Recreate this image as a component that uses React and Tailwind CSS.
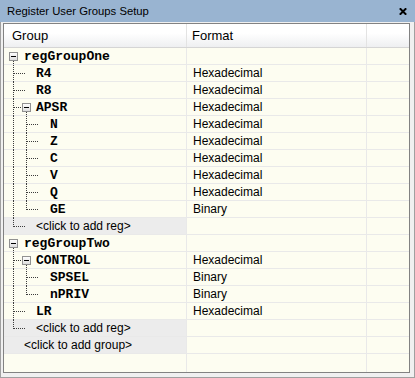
import React from 'react';

const sans = { fontFamily: '"Liberation Sans", Arial, sans-serif' };
const mono = { fontFamily: '"Liberation Mono", "Courier New", monospace' };

// tree guide config per row:
// v0/v1: 'full' | 'top' | 'bottom'  (dotted verticals at level 0 / level 1)
// h0: connector to a level-1 leaf, hb: connector to a level-1 box, h1: connector to a level-2 leaf
const rows = [
  { name: 'regGroupOne', pad: 20, box0: true, v0: 'bottom' },
  { name: 'R4', fmt: 'Hexadecimal', pad: 32, v0: 'full', h0: true },
  { name: 'R8', fmt: 'Hexadecimal', pad: 32, v0: 'full', h0: true },
  { name: 'APSR', fmt: 'Hexadecimal', pad: 32, v0: 'full', hb: true, box1: true, v1: 'bottom' },
  { name: 'N', fmt: 'Hexadecimal', pad: 46, v0: 'full', v1: 'full', h1: true },
  { name: 'Z', fmt: 'Hexadecimal', pad: 46, v0: 'full', v1: 'full', h1: true },
  { name: 'C', fmt: 'Hexadecimal', pad: 46, v0: 'full', v1: 'full', h1: true },
  { name: 'V', fmt: 'Hexadecimal', pad: 46, v0: 'full', v1: 'full', h1: true },
  { name: 'Q', fmt: 'Hexadecimal', pad: 46, v0: 'full', v1: 'full', h1: true },
  { name: 'GE', fmt: 'Binary', pad: 46, v0: 'full', v1: 'top', h1: true },
  { add: '<click to add reg>', pad: 32, v0: 'top', h0: true },
  { name: 'regGroupTwo', pad: 20, box0: true, v0: 'bottom' },
  { name: 'CONTROL', fmt: 'Hexadecimal', pad: 32, v0: 'full', hb: true, box1: true, v1: 'bottom' },
  { name: 'SPSEL', fmt: 'Binary', pad: 46, v0: 'full', v1: 'full', h1: true },
  { name: 'nPRIV', fmt: 'Binary', pad: 46, v0: 'full', v1: 'top', h1: true },
  { name: 'LR', fmt: 'Hexadecimal', pad: 32, v0: 'full', h0: true },
  { add: '<click to add reg>', pad: 32, v0: 'top', h0: true },
  { add: '<click to add group>', pad: 20 },
];

const vSpan = (mode) => {
  if (mode === 'full') return [0, 17];
  if (mode === 'top') return [0, 9];
  if (mode === 'bottom') return [13, 17];
  return null;
};

const MinusBox = ({ x }) => (
  <g>
    <rect x={x + 0.5} y={4.5} width={8} height={8} fill="url(#boxfill)" stroke="#919191" />
    <rect x={x + 2} y={8} width={5} height={1} fill="#000" />
  </g>
);

const TreeGuides = ({ row }) => {
  const dot = { stroke: '#3c3c3c', strokeWidth: 1, strokeDasharray: '1 1', shapeRendering: 'crispEdges' };
  const s0 = vSpan(row.v0);
  const s1 = vSpan(row.v1);
  return (
    <svg className="absolute left-0 top-0 pointer-events-none" width="60" height="17">
      <defs>
        <linearGradient id="boxfill" x1="0" y1="0" x2="0" y2="1">
          <stop offset="0" stopColor="#ffffff" />
          <stop offset="1" stopColor="#dcdcdc" />
        </linearGradient>
      </defs>
      {s0 && <line x1="9.5" y1={s0[0]} x2="9.5" y2={s0[1]} {...dot} />}
      {s1 && <line x1="22.5" y1={s1[0]} x2="22.5" y2={s1[1]} {...dot} />}
      {row.h0 && <line x1="10" y1="8.5" x2="22" y2="8.5" {...dot} />}
      {row.hb && <line x1="10" y1="8.5" x2="18" y2="8.5" {...dot} />}
      {row.h1 && <line x1="23" y1="8.5" x2="35" y2="8.5" {...dot} />}
      {row.box0 && <MinusBox x={5} />}
      {row.box1 && <MinusBox x={18} />}
    </svg>
  );
};

const Row = ({ row }) => (
  <>
    <div
      className={`relative h-[17px] border-b border-r border-[#e9e9e9] flex items-center ${
        row.add ? 'bg-[#ececec]' : ''
      }`}
      style={{ paddingLeft: row.pad }}
    >
      <TreeGuides row={row} />
      {row.add ? (
        <span className="text-[12px] text-black leading-none" style={sans}>
          {row.add}
        </span>
      ) : (
        <span className="text-[13px] font-bold text-black leading-none" style={mono}>
          {row.name}
        </span>
      )}
    </div>
    <div className="h-[17px] border-b border-r border-[#e9e9e9] flex items-center pl-[6px]">
      <span className="text-[12px] text-black leading-none" style={sans}>
        {row.fmt}
      </span>
    </div>
    <div className="h-[17px] border-b border-[#e9e9e9]" />
  </>
);

export default function App() {
  return (
    <div className="w-[415px] h-[378px] flex flex-col bg-[#f0f0f0]" style={sans}>
      {/* Title bar */}
      <div className="h-[22px] bg-[#99b4d1] flex items-center justify-between pl-[7px] pr-[8px]">
        <span className="text-[11.3px] text-black">Register User Groups Setup</span>
        <svg width="8" height="7" viewBox="0 0 8 7">
          <path d="M0.8 0.3 L7.2 6.7 M7.2 0.3 L0.8 6.7" stroke="#000" strokeWidth="2" />
        </svg>
      </div>

      {/* Frame */}
      <div className="flex-1 flex flex-col border-x border-b border-[#a0a0a0] pt-[1px] pl-[2px] pr-[4px] pb-[4px]">
        <div className="flex-1 flex flex-col border border-[#828282] bg-[#fdfdf1]">
          {/* Header */}
          <div className="grid grid-cols-[183px_180px_1fr] h-[24px] border-b border-[#d5d5d5] bg-gradient-to-b from-white from-40% to-[#eeeff1]">
            <div className="border-r border-[#e3e3e3] flex items-center pl-[8px] text-[13px] text-black">Group</div>
            <div className="border-r border-[#e3e3e3] flex items-center pl-[5px] text-[13px] text-black">Format</div>
            <div />
          </div>

          {/* Rows */}
          <div className="grid grid-cols-[183px_180px_1fr]">
            {rows.map((row, i) => (
              <Row key={i} row={row} />
            ))}
          </div>

          {/* Filler */}
          <div className="flex-1 grid grid-cols-[183px_180px_1fr]">
            <div className="border-r border-[#e9e9e9]" />
            <div className="border-r border-[#e9e9e9]" />
            <div />
          </div>
        </div>
      </div>
    </div>
  );
}
